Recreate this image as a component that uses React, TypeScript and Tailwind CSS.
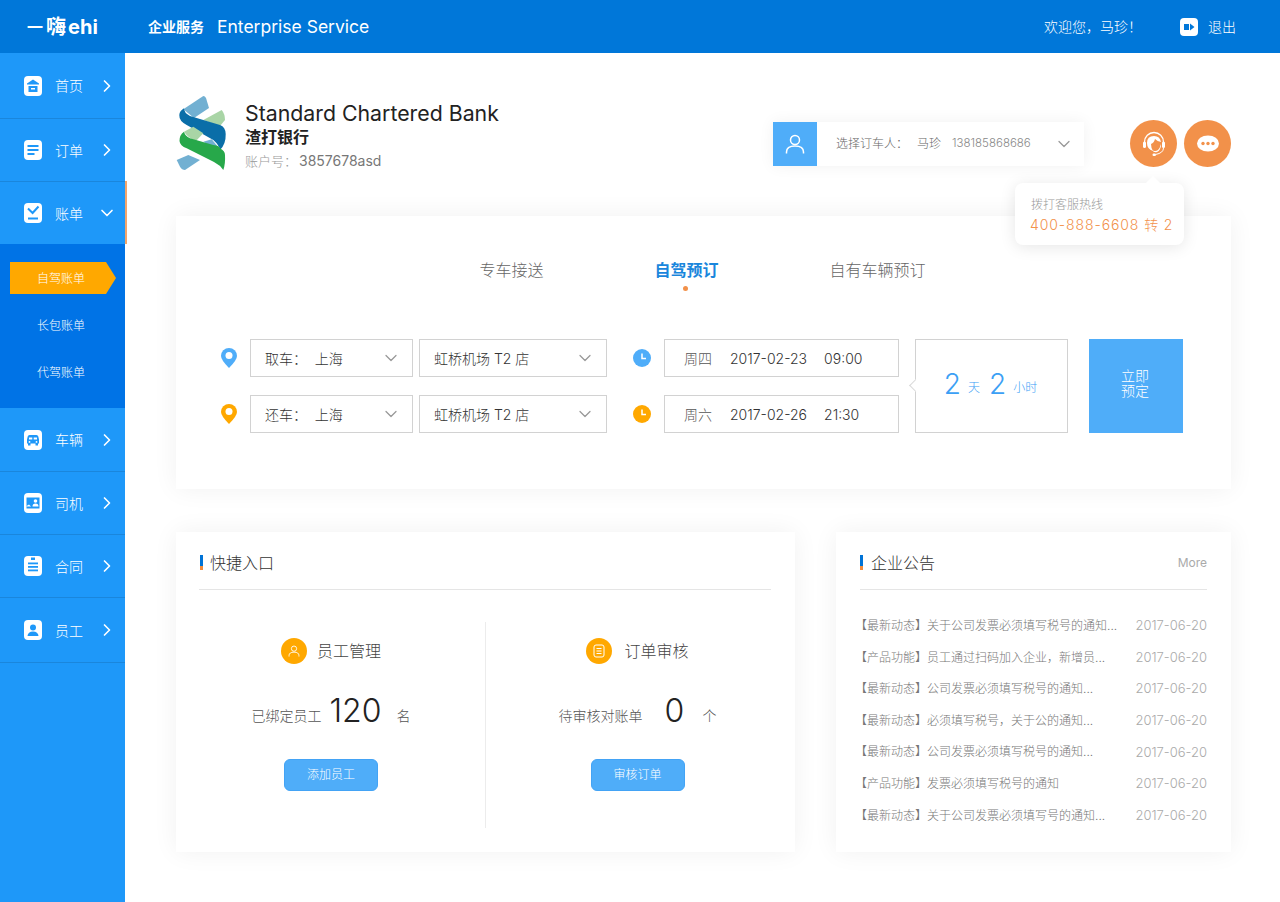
import { ChevronDown, ChevronRight } from "lucide-react";

const navTop = [
  { label: "首页", icon: "home", height: "h-[66px]" },
  { label: "订单", icon: "order", height: "h-[63px]" },
];

const navBottom = [
  { label: "车辆", icon: "car", height: "h-[64px]" },
  { label: "司机", icon: "driver", height: "h-[63px]" },
  { label: "合同", icon: "contract", height: "h-[63px]" },
  { label: "员工", icon: "staff", height: "h-[65px]" },
];

const notices = [
  ["【最新动态】", "关于公司发票必须填写税号的通知..."],
  ["【产品功能】", "员工通过扫码加入企业，新增员..."],
  ["【最新动态】", "公司发票必须填写税号的通知..."],
  ["【最新动态】", "必须填写税号，关于公的通知..."],
  ["【最新动态】", "公司发票必须填写税号的通知..."],
  ["【产品功能】", "发票必须填写税号的通知"],
  ["【最新动态】", "关于公司发票必须填写号的通知..."],
];

function NavIcon({ name }: { name: string }) {
  const blue = "#1e98f9";
  return (
    <svg width="18" height="20" viewBox="0 0 18 20" className="shrink-0">
      <rect width="18" height="20" rx="4" fill="#fff" />
      {name === "home" && (
        <g fill={blue}>
          <path d="M9 3.500 15 7.500v1H3v-1z" />
          <path d="M4.500 10h9v6h-9zM7 12v1.600h4V12z" fillRule="evenodd" />
        </g>
      )}
      {name === "order" && (
        <g fill={blue}>
          <rect x="3.500" y="5" width="11" height="2" />
          <rect x="3.500" y="9" width="11" height="2" />
          <rect x="3.500" y="13" width="7" height="2" />
        </g>
      )}
      {name === "bill" && (
        <g fill="none" stroke={blue} strokeWidth="2">
          <path d="M4 5.500 8.600 10 14.500 3.500" />
          <path d="M4 15.500h10" />
        </g>
      )}
      {name === "car" && (
        <g fill={blue}>
          <path
            d="M5.500 5h7q1.500 0 1.800 1.500l.7 3v4h-1v2h-2.500v-2h-5v2H4v-2H3v-4l.7-3Q4 5 5.500 5zM5 7.500v2h3.300v-2zm4.700 0v2H13v-2zM5.500 11a.9.9 0 1 0 0 1.800.9.9 0 0 0 0-1.800zm7 0a.9.9 0 1 0 0 1.800.9.9 0 0 0 0-1.800z"
            fillRule="evenodd"
          />
        </g>
      )}
      {name === "driver" && (
        <g fill={blue}>
          <path d="M2.500 4.500h13v11h-13z" />
          <circle cx="11.500" cy="8" r="1.800" fill="#fff" />
          <path d="M8.500 13.500q0-3 3-3t3 3z" fill="#fff" />
          <path d="M2.500 13 5 11.500l2 2H2.500z" fill="#fff" />
        </g>
      )}
      {name === "contract" && (
        <g fill={blue}>
          <rect x="7" y="1.500" width="4" height="2.500" />
          <rect x="4" y="6.500" width="10" height="1.800" />
          <rect x="4" y="10" width="10" height="1.800" />
          <rect x="4" y="13.500" width="10" height="1.800" />
        </g>
      )}
      {name === "staff" && (
        <g fill={blue}>
          <circle cx="9" cy="7.500" r="3" />
          <path d="M3.500 16q.5-4.500 5.500-4.500t5.500 4.500z" />
        </g>
      )}
    </svg>
  );
}

function NavRow({ label, icon, height }: { label: string; icon: string; height: string }) {
  return (
    <div className={`flex items-center border-b border-[#1a86dc] pl-[24px] pr-[8px] ${height}`}>
      <NavIcon name={icon} />
      <span className="ml-[13px] text-[14px] font-light text-white">{label}</span>
      <ChevronRight size={20} strokeWidth={2} className="ml-auto text-white" />
    </div>
  );
}

function BankLogo() {
  return (
    <svg width="53" height="76" viewBox="0 0 53 76" className="shrink-0">
      <path d="M7.300 13.300 27.300 0Q29 0 30 2L33 12 18 22z" fill="#72b0d2" />
      <path d="M27.300 24 45.700 14Q49 18 49 24L44 30z" fill="#a9d5a6" />
      <path
        d="M8 12.300Q8 17 14 20L44 29Q49.500 31 49.700 38Q50 48 44 54Q43 49 37.300 44L10.700 29Q3 25 3.300 19Q3.500 15 8 12.300z"
        fill="#0a6ea8"
      />
      <path d="M8 35.700 17.300 30.700 27.300 37.300 20 45Q12 42 8 35.700z" fill="#a9d5a6" />
      <path d="M27.300 45.700 35.700 43.300 44 53.300 38 52z" fill="#72b0d2" />
      <path
        d="M8 35.700Q9 40 14 42.300L37.300 49Q44 50 44 52.300Q49 55 49 59Q49.500 68 47.300 74Q44 69 38 66L10.700 52.300Q4 50 3.500 45Q3.300 39 8 35.700z"
        fill="#27a84a"
      />
      <path d="M0.700 64 12.300 59 24 64 9 74Q6 74 4 70.700z" fill="#72b0d2" />
    </svg>
  );
}

function PersonOutline({ size = 24, className = "" }: { size?: number; className?: string }) {
  return (
    <svg width={size} height={size} viewBox="0 0 24 24" fill="none" stroke="currentColor" strokeWidth="1.500" className={className}>
      <circle cx="12" cy="8" r="4.500" />
      <path d="M3.500 21.500v-1.500q0-6 8.500-6t8.500 6v1.500" />
    </svg>
  );
}

function Pin({ color }: { color: string }) {
  return (
    <svg width="16" height="20" viewBox="0 0 16 20" className="shrink-0">
      <path d="M8 0a8 8 0 0 1 8 8q0 4-8 12Q0 12 0 8a8 8 0 0 1 8-8z" fill={color} />
      <circle cx="8" cy="7.500" r="3.500" fill="#fff" />
    </svg>
  );
}

function Clock({ color }: { color: string }) {
  return (
    <svg width="18" height="18" viewBox="0 0 18 18" className="ml-[26px] shrink-0">
      <circle cx="9" cy="9" r="9" fill={color} />
      <path d="M9 4.500v5h4" fill="none" stroke="#fff" strokeWidth="1.500" />
    </svg>
  );
}

function SelectBox({ text, width }: { text: string; width: string }) {
  return (
    <div className={`flex h-[38px] items-center justify-between border border-[#d2d2d2] pl-[14px] pr-[11px] text-[14px] font-light text-[#333] ${width}`}>
      <span className="whitespace-pre">{text}</span>
      <ChevronDown size={20} strokeWidth={1.500} className="text-[#999]" />
    </div>
  );
}

function FormRow({ color, pick, day, date, time }: { color: string; pick: string; day: string; date: string; time: string }) {
  return (
    <div className="flex items-center">
      <Pin color={color} />
      <div className="ml-[13px] mr-[6px]">
        <SelectBox text={pick} width="w-[163px]" />
      </div>
      <SelectBox text="虹桥机场 T2 店" width="w-[188px]" />
      <Clock color={color} />
      <div className="ml-[13px] flex h-[38px] w-[235px] items-center whitespace-pre border border-[#d2d2d2] pl-[19px] text-[14px] font-light text-[#333]">
        <span className="text-[#555]">{day}</span>
        <span className="ml-[18px]">{date}</span>
        <span className="ml-[17px]">{time}</span>
      </div>
    </div>
  );
}

function SectionTitle({ title, barInset = "" }: { title: string; barInset?: string }) {
  return (
    <div className="flex items-center">
      <span className={`h-[15px] w-[3px] bg-[linear-gradient(#0073d6_75%,#f28c3c_75%)] ${barInset}`} />
      <span className="ml-[8px] text-[16px] font-light text-[#333]">{title}</span>
    </div>
  );
}

function QuickEntry({
  title,
  label,
  value,
  unit,
  action,
  icon,
  wrap,
  titleGap,
  valueGap,
}: {
  title: string;
  label: string;
  value: string;
  unit: string;
  action: string;
  icon: React.ReactNode;
  wrap: string;
  titleGap: string;
  valueGap: string;
}) {
  return (
    <div className={`flex flex-col items-center ${wrap}`}>
      <div className="mt-[16px] flex h-[26px] items-center">
        <span className="flex h-[26px] w-[26px] items-center justify-center rounded-full bg-[#ffa800] text-white">{icon}</span>
        <span className={`text-[16px] font-light text-[#444] ${titleGap}`}>{title}</span>
      </div>
      <div className="mt-[26px] flex h-[42px] items-end text-[14px] font-light text-[#555]">
        <span className="mb-[6px]">{label}</span>
        <span className={`text-[32px] font-light leading-[42px] text-[#222] ${valueGap}`}>{value}</span>
        <span className="mb-[6px]">{unit}</span>
      </div>
      <button className="mt-[27px] h-[32px] w-[94px] rounded-[6px] border border-[#43a3f5] bg-[#4fadf9] text-[12px] font-light text-white">
        {action}
      </button>
    </div>
  );
}

export default function App() {
  return (
    <div className="flex min-h-[902px] flex-col bg-white font-[family-name:Inter,'Noto_Sans_CJK_SC',sans-serif]">
      <header className="flex h-[53px] items-center bg-[#0077d9] text-white">
        <div className="flex w-[125px] items-center pl-[27px]">
          <span className="flex items-center font-bold leading-none">
            <span className="text-[16px]">一</span>
            <span className="ml-[3px] text-[20px]">嗨</span>
            <span className="ml-[2px] text-[20px]">ehi</span>
          </span>
        </div>
        <span className="ml-[23px] text-[14px] font-bold">企业服务</span>
        <span className="ml-[13px] pt-[2px] text-[17.500px]">Enterprise Service</span>
        <span className="ml-auto text-[14px] font-light">欢迎您，马珍！</span>
        <svg width="18" height="18" viewBox="0 0 18 18" className="ml-[38px]">
          <rect width="18" height="18" rx="4" fill="#fff" />
          <path d="M4 6h5v6H4zM10 5.500 14.500 9 10 12.500z" fill="#0077d9" />
        </svg>
        <span className="ml-[10px] mr-[44px] text-[14px] font-light">退出</span>
      </header>

      <div className="flex flex-1">
        <aside className="relative w-[125px] shrink-0 bg-[#1e98f9]">
          {navTop.map((n) => (
            <NavRow key={n.label} label={n.label} icon={n.icon} height={n.height} />
          ))}
          <div className="flex h-[62px] items-center pl-[24px] pr-[8px]">
            <NavIcon name="bill" />
            <span className="ml-[13px] text-[14px] font-light text-white">账单</span>
            <ChevronDown size={20} strokeWidth={2} className="ml-auto text-white" />
          </div>
          <span className="absolute left-[125px] top-[128px] h-[63px] w-[2px] bg-[#f2a56c]" />
          <div className="flex h-[164px] flex-col gap-[15px] bg-[#0073e6] pt-[18px] text-[12px] font-light text-white">
            <div className="ml-[10px] flex h-[32px] w-[106px] items-center bg-[#ffa800] pl-[27px] pt-[2px] [clip-path:polygon(0_0,96px_0,100%_50%,96px_100%,0_100%)]">
              自驾账单
            </div>
            <div className="flex h-[32px] items-center pl-[37px] pt-[2px]">长包账单</div>
            <div className="flex h-[32px] items-center pl-[37px] pt-[2px]">代驾账单</div>
          </div>
          {navBottom.map((n) => (
            <NavRow key={n.label} label={n.label} icon={n.icon} height={n.height} />
          ))}
        </aside>

        <main className="min-w-0 flex-1 pl-[51px] pr-[49px] pt-[43px]">
          <div className="relative flex h-[76px] items-start">
            <BankLogo />
            <div className="ml-[16px] mt-[3px]">
              <div className="text-[21.300px] leading-[28px] text-[#222]">Standard Chartered Bank</div>
              <div className="text-[16px] font-bold leading-[20px] text-[#222]">渣打银行</div>
              <div className="mt-[4px] flex items-center leading-[20px] text-[#777]">
                <span className="text-[13px] font-light text-[#999]">账户号：</span>
                <span className="ml-[2px] text-[14px]">3857678asd</span>
              </div>
            </div>
            <div className="ml-auto mt-[26px] flex h-[44px] w-[311px] items-center bg-white shadow-[0_0_16px_rgba(0,0,0,0.06)]">
              <span className="flex h-[44px] w-[44px] items-center justify-center bg-[#4fadf9] text-white">
                <PersonOutline />
              </span>
              <span className="ml-[19px] text-[12px] font-light text-[#666]">选择订车人：</span>
              <span className="ml-[9px] text-[12px] font-light text-[#666]">马珍</span>
              <span className="ml-[11px] text-[11.500px] font-light text-[#888]">138185868686</span>
              <ChevronDown size={20} strokeWidth={1.500} className="ml-auto mr-[10px] text-[#999]" />
            </div>
            <div className="ml-[46px] mt-[24px] flex h-[47px] w-[47px] items-center justify-center rounded-full bg-[#f2914a]">
              <svg width="24" height="26" viewBox="0 0 24 26" fill="none">
                <path d="M2.500 13V11a9.500 9.500 0 0 1 19 0v2" stroke="#fff" strokeWidth="1.300" />
                <path d="M5 12q0-7 7-7 6 0 7 6-3 0-6-3-1 4-4 5 0 4 2 7-6-2-6-8z" fill="#fff" />
                <path d="M10 19q3 2 6 0 2-2 3-6v2q-1 5-4 6-3 1-5-2z" fill="#fff" />
                <rect x="1" y="10.500" width="3" height="6.500" rx="1.500" fill="#fff" />
                <rect x="20" y="10.500" width="3" height="6.500" rx="1.500" fill="#fff" />
                <path d="M21.500 17q0 5-8 6.500" stroke="#fff" strokeWidth="1" />
                <rect x="10.500" y="22.500" width="3.500" height="2.500" rx="1.200" fill="#fff" />
              </svg>
            </div>
            <div className="ml-[7px] mt-[24px] flex h-[47px] w-[47px] items-center justify-center rounded-full bg-[#f2914a]">
              <svg width="22" height="17" viewBox="0 0 22 17">
                <ellipse cx="11" cy="8.500" rx="11" ry="8" fill="#fff" />
                <circle cx="6" cy="8.500" r="1.700" fill="#f2914a" />
                <circle cx="11" cy="8.500" r="1.700" fill="#f2914a" />
                <circle cx="16" cy="8.500" r="1.700" fill="#f2914a" />
              </svg>
            </div>

            <div className="absolute left-[839px] top-[87px] z-10 h-[62px] w-[169px] rounded-[8px] bg-white pl-[15px] pt-[13px] shadow-[0_2px_16px_rgba(0,0,0,0.1)]">
              <span className="absolute left-[133px] top-[-5px] h-[10px] w-[10px] rotate-45 bg-white" />
              <div className="pl-[1px] text-[12px] font-light leading-[17px] text-[#999]">拨打客服热线</div>
              <div className="mt-[2px] whitespace-nowrap text-[14px] font-light leading-[20px] tracking-[0.900px] text-[#f2914a]">
                400-888-6608 转 2
              </div>
            </div>
          </div>

          <section className="mt-[44px] h-[273px] bg-white px-[45px] shadow-[0_0_24px_rgba(0,0,0,0.06)]">
            <div className="flex h-[123px] items-start justify-center pr-[2px] pt-[42px] text-[16px] font-light text-[#666]">
              <span className="leading-[24px]">专车接送</span>
              <span className="relative ml-[111px] font-bold leading-[24px] text-[#1a86dc]">
                自驾预订
                <span className="absolute left-[29px] top-[28px] h-[5px] w-[5px] rounded-full bg-[#f2914a]" />
              </span>
              <span className="ml-[111px] leading-[24px]">自有车辆预订</span>
            </div>
            <div className="flex">
              <div className="flex flex-col gap-[18px]">
                <FormRow color="#4fadf9" pick="取车：  上海" day="周四" date="2017-02-23" time="09:00" />
                <FormRow color="#ffa800" pick="还车：  上海" day="周六" date="2017-02-26" time="21:30" />
              </div>
              <div className="relative ml-[16px] flex h-[94px] w-[153px] items-center justify-center border border-[#d2d2d2] bg-white pr-[2px] text-[#3ba0f5]">
                <span className="absolute left-[-5px] top-[41px] h-[9px] w-[9px] rotate-45 border-b border-l border-[#d8d8d8] bg-white" />
                <span className="mt-[-4px] text-[28px] font-light">2</span>
                <span className="ml-[7px] mt-[4px] text-[12px] font-light">天</span>
                <span className="ml-[9px] mt-[-4px] text-[28px] font-light">2</span>
                <span className="ml-[7px] mt-[4px] text-[12px] font-light">小时</span>
              </div>
              <button className="ml-[21px] h-[94px] w-[94px] bg-[#4fadf9] pb-[6px] pr-[2px] text-[14px] font-light leading-[15px] text-white">
                立即
                <br />
                预定
              </button>
            </div>
          </section>

          <div className="mt-[43px] flex gap-[41px]">
            <section className="h-[320px] w-[619px] bg-white pl-[23px] shadow-[0_0_24px_rgba(0,0,0,0.06)]">
              <div className="mr-[24px] flex h-[58px] items-center border-b border-[#e5e5e5] pt-[4px]">
                <SectionTitle title="快捷入口" barInset="ml-[1px] mr-[-1px]" />
              </div>
              <div className="mt-[32px] flex h-[206px]">
                <QuickEntry
                  title="员工管理"
                  label="已绑定员工"
                  value="120"
                  unit="名"
                  action="添加员工"
                  wrap="w-[287px] border-r border-[#ececec] pr-[22px]"
                  titleGap="ml-[10px]"
                  valueGap="ml-[8px] mr-[15px]"
                  icon={<PersonOutline size={14} />}
                />
                <QuickEntry
                  title="订单审核"
                  label="待审核对账单"
                  value="0"
                  unit="个"
                  action="审核订单"
                  wrap="w-[302px] pl-[1px]"
                  titleGap="ml-[12px]"
                  valueGap="ml-[22px] mr-[18px]"
                  icon={
                    <svg width="14" height="14" viewBox="0 0 14 14" fill="none" stroke="currentColor" strokeWidth="1">
                      <rect x="2" y="1" width="10" height="12" rx="2" />
                      <path d="M4.500 4.500h5M4.500 7h5M4.500 9.500h5" />
                    </svg>
                  }
                />
              </div>
            </section>

            <section className="h-[320px] w-[395px] bg-white px-[24px] shadow-[0_0_24px_rgba(0,0,0,0.06)]">
              <div className="flex h-[58px] items-center justify-between border-b border-[#e5e5e5] pt-[4px]">
                <SectionTitle title="企业公告" />
                <span className="text-[12px] text-[#aaa]">More</span>
              </div>
              <div className="mt-[27px] flex flex-col gap-[13.600px]">
                {notices.map(([tag, text], i) => (
                  <div key={i} className="flex h-[18px] items-center justify-between text-[12px] font-light">
                    <span className="ml-[-5px] whitespace-nowrap text-[#777]">
                      {tag}
                      {text}
                    </span>
                    <span className="text-[13px] text-[#aaa]">2017-06-20</span>
                  </div>
                ))}
              </div>
            </section>
          </div>
        </main>
      </div>
    </div>
  );
}
